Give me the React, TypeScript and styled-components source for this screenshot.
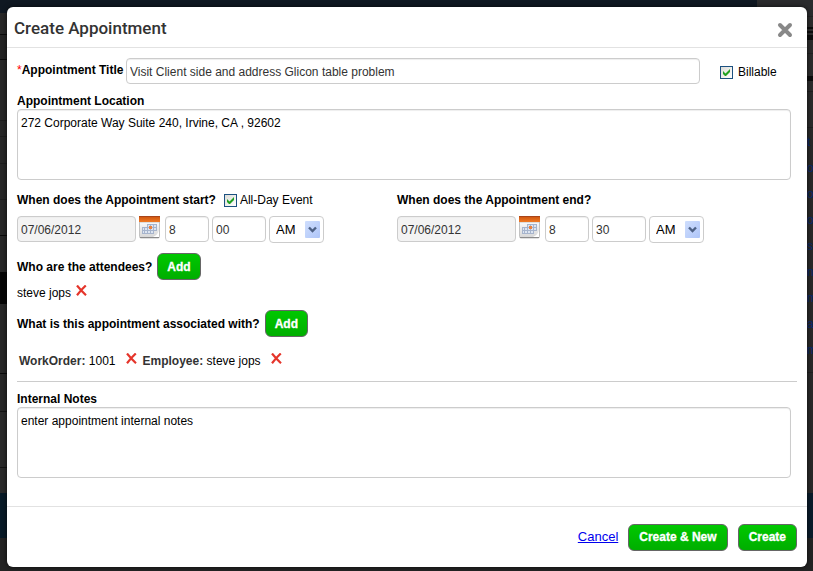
import React from "react";
import styled, { createGlobalStyle } from "styled-components";

const GlobalStyle = createGlobalStyle`
  * { box-sizing: border-box; }
  body {
    margin: 0;
    background: #272727;
    color: #000;
    font: 12px/16px "Liberation Sans", Arial, sans-serif;
  }
  input, select, textarea, button { font: inherit; margin: 0; }
`;

const Page = styled.div`
  position: relative;
  min-height: 100vh;
  overflow: hidden;
  padding: 7px 6px 4px 7px;
  background: linear-gradient(
    #0f1822 0 13px, #272727 13px 34px, #0a0a0a 34px 35px, #232323 35px 59px,
    #0a0a0a 59px 60px, #272727 60px 120px, #1e1e1e 120px 121px, #272727 121px 136px,
    #1e1e1e 136px 137px, #272727 137px 163px, #1e1e1e 163px 164px, #272727 164px 199px,
    #1e1e1e 199px 200px, #272727 200px 235px, #0a0a0a 235px 236px, #272727 236px 272px,
    #050505 272px 304px, #272727 304px 373px, #0a0a0a 373px 374px, #272727 374px 411px,
    #141414 411px 412px, #2a2a2a 412px 467px, #141414 467px 468px, #2a2a2a 468px 493px,
    #081a27 493px 538px, #232323 538px
  );
`;

const SideMenu = styled.nav`
  position: absolute;
  top: 0;
  right: 0;
  bottom: 0;
  width: 56px;
  padding: 129px 0 0 50px;
  background: linear-gradient(
    #2a2b2d 0 16px, #222 16px 17px, #2c2c2c 17px 27px, #0c0c0c 27px 29px,
    #2c2c2c 29px 31px, #0c0c0c 31px 33px, #2c2c2c 33px 35px, #0c0c0c 35px 40px,
    #2c2c2c 40px 53px, #222 53px 54px, #2c2c2c 54px 76px, #0c0c0c 76px 81px,
    #2c2c2c 81px 91px, #1f1f1f 91px 92px, #2a2a2a 92px 127px, #1f1f1f 127px 128px,
    #292929 128px 372px, #1f1f1f 372px 373px, #292929 373px 493px,
    #0a1c2b 493px 538px, #232323 538px
  );
`;

const MenuLink = styled.a`
  display: block;
  height: 26px;
  line-height: 26px;
  color: #0a2a70;
  text-decoration: none;
`;

const Dialog = styled.form`
  position: relative;
  display: flex;
  flex-direction: column;
  min-height: calc(100vh - 11px);
  border-radius: 6px;
  background: #fff;
  box-shadow: 0 0 5px rgba(0, 0, 0, 0.7);
`;

const Header = styled.header`
  display: flex;
  align-items: center;
  justify-content: space-between;
  height: 41px;
  padding: 2px 14px 0 7px;
  border-bottom: 1px solid #e2e2e2;
`;

const Title = styled.h1`
  margin: 0;
  color: #333;
  font: 500 17px/24px Roboto, "Liberation Sans", sans-serif;
`;

const IconButton = styled.button`
  display: inline-flex;
  flex: none;
  padding: 0;
  border: 0;
  background: none;
  cursor: pointer;
`;

const CloseButton = styled(IconButton)`
  padding-top: 3px;
`;

const Body = styled.main`
  flex: 1;
  padding: 10px 10px 28px;
`;

const FieldArea = styled.div`
  padding-right: 6px;
`;

const TitleRow = styled.div`
  display: flex;
  align-items: flex-start;
  margin-bottom: 9px;
`;

const Label = styled.label`
  display: block;
  font-weight: bold;
`;

const TitleLabel = styled(Label)`
  width: 109px;
  padding-top: 4px;
  white-space: nowrap;
`;

const Required = styled.span`
  color: #f00;
  font-weight: normal;
`;

const TextInput = styled.input<{ $width?: number }>`
  width: ${(p) => (p.$width ? `${p.$width}px` : "auto")};
  flex: ${(p) => (p.$width ? "none" : "1")};
  min-width: 0;
  height: 26px;
  padding: 2px 3px 0;
  border: 1px solid #ccc;
  border-radius: 4px;
  background: #fff;
  color: #333;
  box-shadow: inset 0 1px 1px #eee;
  &:read-only { background: #f3f3f3; }
`;

const TextArea = styled.textarea`
  display: block;
  width: 100%;
  height: 71px;
  padding: 5px 3px;
  border: 1px solid #ccc;
  border-radius: 4px;
  resize: none;
  line-height: 16px;
  color: #000;
  box-shadow: inset 0 1px 1px #eee;
`;

const CheckLabel = styled.label<{ $gap: number }>`
  display: inline-flex;
  align-items: center;
  gap: ${(p) => p.$gap}px;
`;

const BillableArea = styled.div`
  width: 91px;
  padding: 6px 0 0 20px;
`;

const Stack = styled.span`
  display: inline-grid;
  align-items: center;
  > * { grid-area: 1 / 1; }
  > svg { pointer-events: none; }
`;

const CheckInput = styled.input`
  appearance: none;
  width: 13px;
  height: 13px;
  border: 1px solid #1c5180;
  background: linear-gradient(135deg, #dcdcd7, #fff);
  & + svg { visibility: hidden; }
  &:checked + svg { visibility: visible; }
`;

const Dates = styled.div`
  display: grid;
  grid-template-columns: 380px minmax(0, 1fr);
  padding: 12px 0 10px;
`;

const DateHeading = styled.div`
  display: flex;
  align-items: center;
  gap: 8px;
  height: 16px;
  margin-bottom: 8px;
  font-weight: bold;
  > label { font-weight: normal; }
`;

const DateFields = styled.div`
  display: flex;
  align-items: flex-start;
  gap: 3px;
`;

const CalendarButton = styled(IconButton)`
  margin-right: 2px;
`;

const Period = styled.select`
  appearance: none;
  width: 55px;
  height: 27px;
  padding: 0 6px;
  border: 1px solid #ccc;
  border-radius: 4px;
  background: #fff;
  color: #000;
  font-size: 13px;
`;

const PeriodStack = styled(Stack)`
  > svg { justify-self: end; margin-right: 4px; }
`;

const SectionRow = styled.div`
  display: flex;
  align-items: center;
  gap: 5px;
  font-weight: bold;
`;

const GreenButton = styled.button<{ $wide?: boolean }>`
  height: 27px;
  padding: 0 ${(p) => (p.$wide ? 10 : 9)}px;
  border: 1px solid #666;
  border-radius: 6px;
  background: linear-gradient(#00c800, #00ae00);
  color: #fff;
  font-weight: bold;
  -webkit-text-stroke: 0.3px #fff;
  cursor: pointer;
`;

const Chips = styled.div<{ $associated?: boolean }>`
  display: flex;
  align-items: center;
  padding: ${(p) => (p.$associated ? "16px 2px 12px" : "5px 0 9px")};
`;

const Chip = styled.span<{ $gap: number }>`
  display: inline-flex;
  align-items: flex-start;
  gap: ${(p) => p.$gap}px;
  margin-right: 6px;
`;

const Kind = styled.b`
  color: #333;
`;

const Divider = styled.hr`
  height: 1px;
  margin: 0 0 9px;
  border: 0;
  background: #ccc;
`;

const Footer = styled.footer`
  display: flex;
  align-items: center;
  justify-content: flex-end;
  gap: 10px;
  height: 61px;
  padding: 0 10px;
  border-top: 1px solid #e2e2e2;
`;

const Cancel = styled.a`
  color: #00e;
  font-size: 13px;
`;

const CloseIcon = () => (
  <svg width="16" height="16" viewBox="0 0 16 16" aria-hidden="true">
    <path d="M3 3 13 13M13 3 3 13" stroke="#888" strokeWidth="4" strokeLinecap="round" />
  </svg>
);

const RemoveIcon = () => (
  <svg width="11" height="11" viewBox="0 0 11 11" aria-hidden="true">
    <path d="M1 .5C3.500 3.500 6.500 7 10 10.200M9.800.5C6.500 3.500 3.500 7 1 10.200" fill="none" stroke="#e5352b" strokeWidth="2.2" />
  </svg>
);

const CalendarIcon = () => (
  <svg width="21" height="23" viewBox="0 0 21 23" aria-hidden="true">
    <defs>
      <linearGradient id="calTop" x2="0" y2="1">
        <stop stopColor="#c9510e" />
        <stop offset="1" stopColor="#f07a24" />
      </linearGradient>
      <linearGradient id="calPage" x2="0" y2="1">
        <stop stopColor="#fafafa" />
        <stop offset="1" stopColor="#d5d5d5" />
      </linearGradient>
    </defs>
    <path d="M.5 6H20.5V20.5Q20.5 22 19 22H2Q.5 22 .5 20.5Z" fill="url(#calPage)" stroke="#c2c2c2" />
    <path d="M1 21.5H20" stroke="#8b8b8b" />
    <path d="M0 1Q0 0 1 0H20Q21 0 21 1V6H0Z" fill="url(#calTop)" />
    <path d="M0 .5H21" stroke="#a8451a" />
    <path d="M8 8H18V15H15V18H3V11H8Z" fill="#dde5f1" />
    <path d="M8.5 8V18M11.5 8V18M14.5 8V18M17.5 8V15M3.5 11V18M5.5 11V18M8 8.5H18M3 11.5H18M3 14.5H18M3 17.5H15" stroke="#a6b4cc" fill="none" />
    <path d="M10 10H13V13H10Z" fill="#ec8140" />
    <path d="M20 14Q19 19 14 21H20Z" fill="#fff" />
  </svg>
);

const TickIcon = () => (
  <svg width="13" height="13" viewBox="0 0 13 13" aria-hidden="true">
    <path d="M3 5V8L5 10H6L10 6V3L5.500 7.500Z" fill="#21a121" />
  </svg>
);

const ArrowIcon = () => (
  <svg width="15" height="17" viewBox="0 0 15 17" aria-hidden="true">
    <defs>
      <linearGradient id="arrowFace" x2="1" y2="1">
        <stop stopColor="#cfdefd" />
        <stop offset="1" stopColor="#aec5f8" />
      </linearGradient>
    </defs>
    <rect width="15" height="17" rx="1" fill="url(#arrowFace)" />
    <path d="M4 6.500 7.500 10 11 6.500" fill="none" stroke="#4d6185" strokeWidth="2.400" />
  </svg>
);

function Check({ text, gap }: { text: string; gap: number }) {
  return (
    <CheckLabel $gap={gap}>
      <Stack>
        <CheckInput type="checkbox" defaultChecked />
        <TickIcon />
      </Stack>
      {text}
    </CheckLabel>
  );
}

function DateGroup({ name, hour, minute }: { name: string; hour: string; minute: string }) {
  return (
    <DateFields>
      <TextInput $width={119} readOnly value="07/06/2012" aria-label={`${name} date`} />
      <CalendarButton type="button" aria-label={`Choose ${name} date`}>
        <CalendarIcon />
      </CalendarButton>
      <TextInput $width={44} defaultValue={hour} aria-label={`${name} hour`} />
      <TextInput $width={54} defaultValue={minute} aria-label={`${name} minute`} />
      <PeriodStack>
        <Period defaultValue="AM" aria-label={`${name} period`}>
          <option>AM</option>
          <option>PM</option>
        </Period>
        <ArrowIcon />
      </PeriodStack>
    </DateFields>
  );
}

function Entry({ kind, value, gap }: { kind?: string; value: string; gap: number }) {
  return (
    <Chip $gap={gap}>
      <span>
        {kind && <Kind>{kind}: </Kind>}
        {value}
      </span>
      <IconButton type="button" aria-label={`Remove ${value}`}>
        <RemoveIcon />
      </IconButton>
    </Chip>
  );
}

const menu = ["t", "o", "oj", "o", "s", "no", "mp", "ac", "m"];

export default function App() {
  return (
    <>
      <GlobalStyle />
      <Page>
        <SideMenu aria-hidden="true">
          {menu.map((text, i) => (
            <MenuLink key={i} href="#" tabIndex={-1}>
              {text}
            </MenuLink>
          ))}
        </SideMenu>
        <Dialog role="dialog" aria-labelledby="dialog-title">
          <Header>
            <Title id="dialog-title">Create Appointment</Title>
            <CloseButton type="button" aria-label="Close">
              <CloseIcon />
            </CloseButton>
          </Header>
          <Body>
            <FieldArea>
              <TitleRow>
                <TitleLabel htmlFor="title">
                  <Required>*</Required>Appointment Title
                </TitleLabel>
                <TextInput id="title" defaultValue="Visit Client side and address Glicon table problem" />
                <BillableArea>
                  <Check text="Billable" gap={5} />
                </BillableArea>
              </TitleRow>
              <Label htmlFor="location">Appointment Location</Label>
              <TextArea id="location" defaultValue="272 Corporate Way Suite 240, Irvine, CA , 92602" />
              <Dates>
                <div>
                  <DateHeading>
                    When does the Appointment start?
                    <Check text="All-Day Event" gap={3} />
                  </DateHeading>
                  <DateGroup name="Start" hour="8" minute="00" />
                </div>
                <div>
                  <DateHeading>When does the Appointment end?</DateHeading>
                  <DateGroup name="End" hour="8" minute="30" />
                </div>
              </Dates>
            </FieldArea>
            <SectionRow>
              Who are the attendees?
              <GreenButton type="button">Add</GreenButton>
            </SectionRow>
            <Chips>
              <Entry value="steve jops" gap={5} />
            </Chips>
            <SectionRow>
              What is this appointment associated with?
              <GreenButton type="button">Add</GreenButton>
            </SectionRow>
            <Chips $associated>
              <Entry kind="WorkOrder" value="1001" gap={10} />
              <Entry kind="Employee" value="steve jops" gap={10} />
            </Chips>
            <Divider />
            <FieldArea>
              <Label htmlFor="notes">Internal Notes</Label>
              <TextArea id="notes" defaultValue="enter appointment internal notes" />
            </FieldArea>
          </Body>
          <Footer>
            <Cancel href="#">Cancel</Cancel>
            <GreenButton type="submit" $wide>Create &amp; New</GreenButton>
            <GreenButton type="submit" $wide>Create</GreenButton>
          </Footer>
        </Dialog>
      </Page>
    </>
  );
}
